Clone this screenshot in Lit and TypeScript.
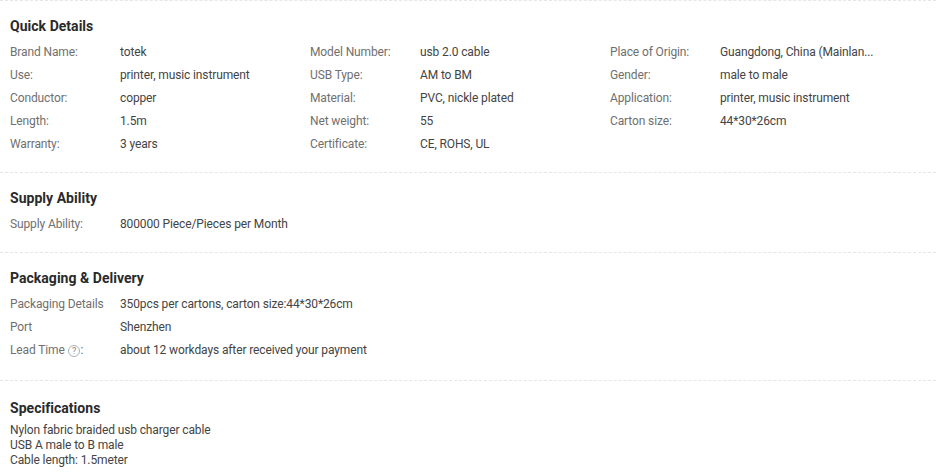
import { LitElement, html, css } from "lit";
import { customElement } from "lit/decorators.js";

const quick: [string, string][] = [
  ["Brand Name:", "totek"], ["Model Number:", "usb 2.0 cable"], ["Place of Origin:", "Guangdong, China (Mainlan..."],
  ["Use:", "printer, music instrument"], ["USB Type:", "AM to BM"], ["Gender:", "male to male"],
  ["Conductor:", "copper"], ["Material:", "PVC, nickle plated"], ["Application:", "printer, music instrument"],
  ["Length:", "1.5m"], ["Net weight:", "55"], ["Carton size:", "44*30*26cm"],
  ["Warranty:", "3 years"], ["Certificate:", "CE, ROHS, UL"],
];

@customElement("app-root")
export class AppRoot extends LitElement {
  static styles = css`
    :host { display: block; width: 936px; height: 475px; overflow: hidden; background: #fff;
      font-family: Roboto, sans-serif; font-size: 12px; letter-spacing: -0.12px; color: #333; }
    .sec { padding: 0 0 0 10px; border-top: 1px dashed #e6e6e6; box-sizing: border-box; }
    h3 { margin: 0; font-size: 14px; line-height: 20px; font-weight: 700; color: #2a2a2a; letter-spacing: 0.03px; }
    .s1 { height: 172px; padding-top: 15px; }
    .s2 { height: 80px; padding-top: 15px; }
    .s3 { height: 128px; padding-top: 15px; }
    .s4 { padding-top: 17px; }
    .grid { display: grid; grid-template-columns: repeat(3, 300px); margin-top: 5px; }
    .list { margin-top: 5px; }
    .item { display: flex; height: 23px; line-height: 23px; }
    .k { width: 110px; flex: none; color: #707070; }
    .v { color: #444; white-space: nowrap; }
    .q { display: inline-block; width: 12px; height: 12px; vertical-align: -3px; margin: 0 1px 0 0; }
    .q svg { display: block; }
    .desc { margin-top: 5px; line-height: 15px; color: #444; }
  `;
  render() {
    return html`
      <section class="sec s1">
        <h3>Quick Details</h3>
        <div class="grid">
          ${quick.map(([k, v]) => html`<div class="item"><span class="k">${k}</span><span class="v">${v}</span></div>`)}
        </div>
      </section>
      <section class="sec s2">
        <h3>Supply Ability</h3>
        <div class="list">
          <div class="item"><span class="k">Supply Ability:</span><span class="v">800000 Piece/Pieces per Month</span></div>
        </div>
      </section>
      <section class="sec s3">
        <h3>Packaging &amp; Delivery</h3>
        <div class="list">
          <div class="item"><span class="k">Packaging Details</span><span class="v">350pcs per cartons, carton size:44*30*26cm</span></div>
          <div class="item"><span class="k">Port</span><span class="v">Shenzhen</span></div>
          <div class="item"><span class="k">Lead Time <span class="q"><svg width="12" height="12" viewBox="0 0 12 12"><circle cx="6" cy="6" r="5.5" fill="none" stroke="#999" stroke-width="0.8"/><text x="6" y="9.2" text-anchor="middle" font-size="9" fill="#888" font-family="Roboto, sans-serif">?</text></svg></span>:</span><span class="v">about 12 workdays after received your payment</span></div>
        </div>
      </section>
      <section class="sec s4">
        <h3>Specifications</h3>
        <div class="desc">Nylon fabric braided usb charger cable<br />USB A male to B male<br />Cable length: 1.5meter</div>
      </section>
    `;
  }
}
